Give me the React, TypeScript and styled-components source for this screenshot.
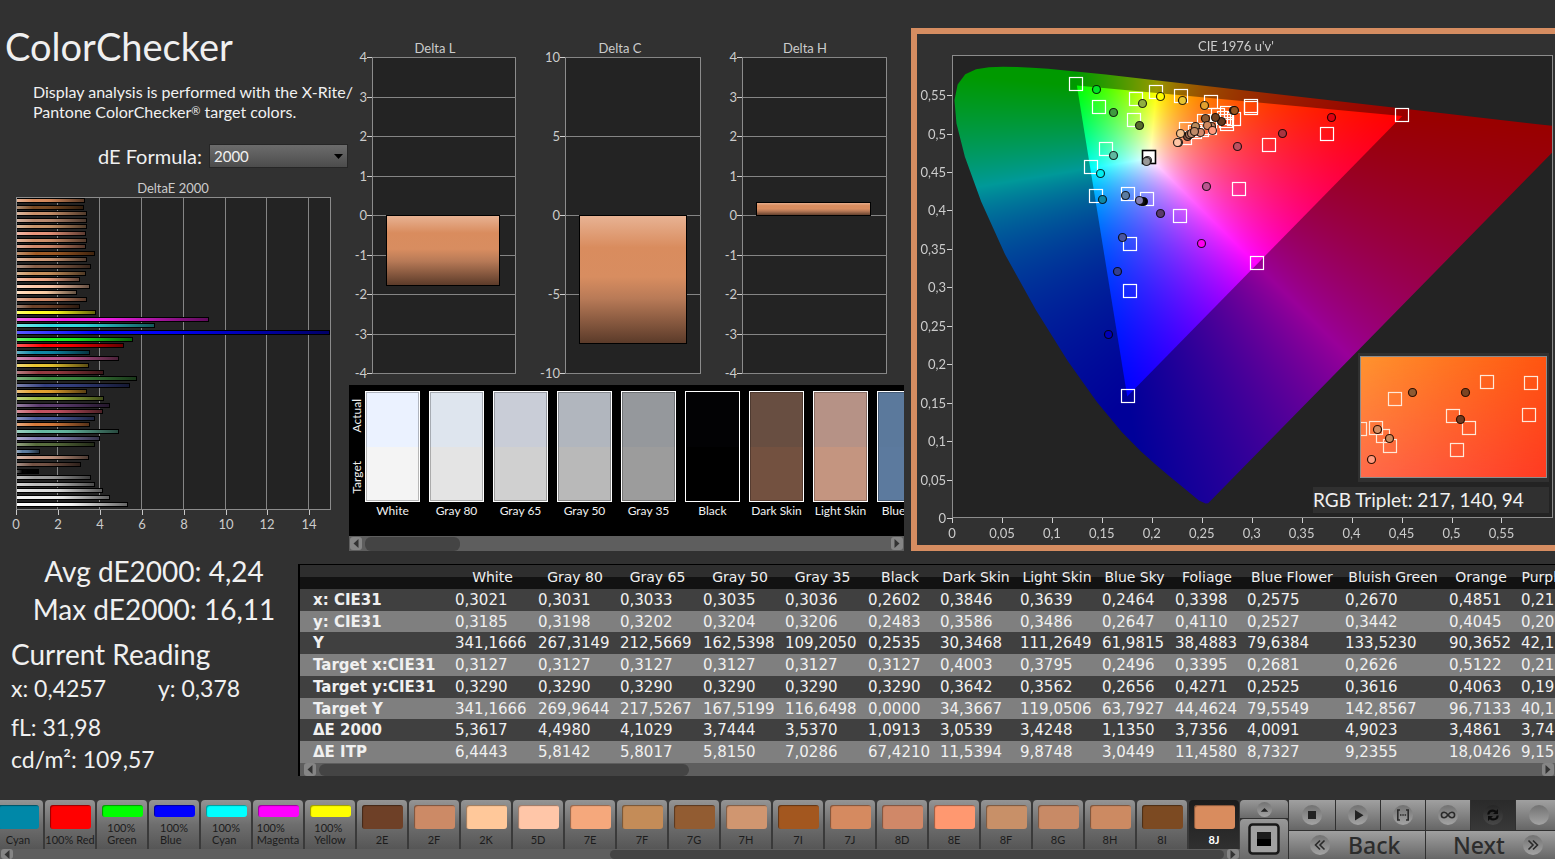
import React, { useEffect, useRef } from "react";
import styled, { createGlobalStyle, css } from "styled-components";

const ui = `Lato, "Liberation Sans", sans-serif`;
const wide = `"DejaVu Sans", "Noto Sans", sans-serif`;

const GlobalStyle = createGlobalStyle`
  *, *::before, *::after { box-sizing: border-box; }
  body { margin: 0; background: #313131; color: #f0f0f0; font-family: ${ui}; overflow-x: hidden; }
  button, select { font: inherit; color: inherit; border: 0; padding: 0; margin: 0; }
  h1, h2, p { margin: 0; font-weight: 400; }
`;

const Page = styled.main`
  display: flex;
  flex-direction: column;
  min-height: 100vh;
  overflow: hidden;
`;

const TopSection = styled.section`
  display: grid;
  grid-template-columns: 349px 555px minmax(0, 1fr);
  align-items: start;
`;

/* ---------- left column ---------- */

const LeftColumn = styled.div`
  padding-top: 22px;
`;

const Title = styled.h1`
  padding-left: 5px;
  font-size: 38px;
  line-height: 48px;
`;

const Description = styled.p`
  padding: 12px 0 0 33px;
  font-size: 16px;
  line-height: 20px;
  white-space: nowrap;
`;

const Registered = styled.span`
  font-size: 11px;
  line-height: 1;
  vertical-align: 3px;
`;

const FormulaRow = styled.div`
  display: flex;
  justify-content: flex-end;
  align-items: center;
  gap: 7px;
  padding: 22px 1px 9px 0;
`;

const FormulaLabel = styled.label`
  font-size: 20px;
  line-height: 24px;
`;

const SelectShell = styled.span`
  display: grid;
  align-items: center;
  width: 139px;
  svg { grid-area: 1 / 1; justify-self: end; margin-right: 5px; pointer-events: none; }
`;

const FormulaSelect = styled.select`
  grid-area: 1 / 1;
  width: 100%;
  height: 24px;
  padding-left: 4px;
  appearance: none;
  border: 1px solid #262626;
  background: linear-gradient(#6c6c6c, #4c4c4c);
  font-size: 15px;
  line-height: 22px;
`;

const ChartSvg = styled.svg`
  display: block;
  width: 100%;
  text { font-family: ${ui}; font-size: 13px; fill: #cccccc; }
`;

const hBars: [number, string][] = [
  [85, "#d98c5e"], [84, "#7a4a22"], [87, "#c8906a"], [87, "#b98a70"], [87, "#c8946a"],
  [86, "#e8947a"], [87, "#d0906c"], [86, "#d0886a"], [95, "#a05a24"], [87, "#cf9a78"],
  [91, "#8a6048"], [86, "#c8905c"], [80, "#f0a888"], [90, "#ffc8a8"], [77, "#ffd0a8"],
  [87, "#d08a68"], [80, "#6f4228"], [96, "#ffff1e"], [209, "#f01ee6"], [155, "#30dce0"],
  [330, "#0000ff"], [133, "#1ef01e"], [124, "#ff0000"], [90, "#0e87a5"], [119, "#bb5590"],
  [89, "#e8c530"], [104, "#93383f"], [137, "#3f8a3f"], [130, "#343f80"], [87, "#e3a02e"],
  [104, "#9fbc40"], [110, "#5a3a6d"], [103, "#c15060"], [95, "#4a5a9f"], [90, "#d67a3a"],
  [119, "#65b89f"], [100, "#8580b5"], [95, "#576c3c"], [40, "#5c7ca0"], [89, "#c29480"],
  [81, "#735244"], [39, "#000000"], [91, "#9a9a9a"], [95, "#bbbbbb"], [103, "#dddddd"],
  [110, "#eeeeee"], [128, "#ffffff"],
];

function DeltaEChart() {
  const ticks = [16, 58, 100, 142, 184, 226, 267, 309];
  return (
    <ChartSvg viewBox="0 0 349 362" role="img" aria-label="DeltaE 2000">
      <defs>
        <linearGradient id="sheen" x1="0" x2="1" y1="0" y2="0">
          <stop offset="0" stopColor="#fff" stopOpacity="0.35" />
          <stop offset="0.25" stopColor="#fff" stopOpacity="0" />
          <stop offset="0.5" stopColor="#000" stopOpacity="0.05" />
          <stop offset="1" stopColor="#000" stopOpacity="0.6" />
        </linearGradient>
      </defs>
      <text x="173" y="16" textAnchor="middle">DeltaE 2000</text>
      <rect x="16.5" y="20.5" width="314" height="312" fill="#232323" stroke="#8c8c8c" />
      {ticks.map((x, i) => (
        <g key={x}>
          {i > 0 && <path d={`M${x - 0.5} 21V332`} stroke="#858585" />}
          <path d={`M${x + 0.5} 333v5`} stroke="#c8c8c8" />
          <text x={x} y="352" textAnchor="middle">{i * 2}</text>
        </g>
      ))}
      {hBars.map(([end, color], i) => {
        const y = Math.round(22 + i * 6.6);
        return (
          <g key={i}>
            <rect x="17" y={y - 1} width={end - 17} height="5" fill="#000" />
            <rect x="17" y={y} width={end - 18} height="3" fill={color} />
            <rect x="17" y={y} width={end - 18} height="3" fill="url(#sheen)" />
          </g>
        );
      })}
    </ChartSvg>
  );
}

/* ---------- delta L / C / H ---------- */

const MiddleColumn = styled.div`
  padding-top: 34px;
`;

type Delta = {
  title: string; center: number; left: number; right: number; max: number; step: number;
  bar: [number, number, number, number];
};

const deltas: Delta[] = [
  { title: "Delta L", center: 86, left: 23, right: 167, max: 4, step: 1, bar: [37, 181, 114, 71] },
  { title: "Delta C", center: 271, left: 216, right: 352, max: 10, step: 5, bar: [230, 181, 108, 129] },
  { title: "Delta H", center: 456, left: 393, right: 538, max: 4, step: 1, bar: [407, 168, 115, 14] },
];

function DeltaCharts() {
  return (
    <ChartSvg viewBox="0 0 555 351" role="img" aria-label="Delta L, Delta C and Delta H">
      <defs>
        <linearGradient id="copper" x1="0" x2="0" y1="0" y2="1">
          <stop offset="0" stopColor="#e8b394" />
          <stop offset="0.25" stopColor="#d98c5e" />
          <stop offset="0.48" stopColor="#d88d60" />
          <stop offset="0.65" stopColor="#b87a57" />
          <stop offset="1" stopColor="#5a3a29" />
        </linearGradient>
      </defs>
      {deltas.map((d) => {
        const values: number[] = [];
        for (let v = d.max; v >= -d.max; v -= d.step) values.push(v);
        return (
          <g key={d.title}>
            <text x={d.center} y="19" textAnchor="middle">{d.title}</text>
            <rect x={d.left + 0.5} y="23.5" width={d.right - d.left - 1} height="316" fill="#232323" stroke="#8c8c8c" />
            {values.map((v, i) => {
              const y = Math.round(23 + (i * 316) / (values.length - 1));
              return (
                <g key={v}>
                  <path d={`M${d.left} ${y + 0.5}H${d.right}`} stroke="#858585" />
                  <path d={`M${d.left - 5} ${y + 0.5}H${d.left}`} stroke="#d0d0d0" />
                  <text x={d.left - 5} y={y + 5} textAnchor="end">{v}</text>
                </g>
              );
            })}
            <rect x={d.bar[0] + 0.5} y={d.bar[1] + 0.5} width={d.bar[2] - 1} height={d.bar[3] - 1} fill="url(#copper)" stroke="#000" />
          </g>
        );
      })}
    </ChartSvg>
  );
}

/* ---------- scroll bars ---------- */

const Track = styled.div<{ $h: number; $pad: number }>`
  display: flex;
  align-items: center;
  gap: 3px;
  height: ${(p) => p.$h}px;
  padding: 0 1px 0 ${(p) => p.$pad}px;
  background: #5e5e5e;
`;

const ArrowButton = styled.button<{ $end?: boolean }>`
  display: grid;
  place-items: center;
  flex: none;
  width: 12px;
  height: 100%;
  max-height: 13px;
  margin-left: ${(p) => (p.$end ? "auto" : "0")};
  border-radius: 3px;
  background: #858585;
`;

const Thumb = styled.div<{ $w: string; $offset?: string }>`
  width: ${(p) => p.$w};
  height: calc(100% - 1px);
  margin-left: ${(p) => p.$offset ?? "0"};
  border-radius: 6px;
  background: #444;
`;

function ScrollBar({ h, w, offset, name, pad = 1 }: { h: number; w: string; offset?: string; name: string; pad?: number }) {
  return (
    <Track $h={h} $pad={pad}>
      <ArrowButton aria-label={`Scroll ${name} left`}>
        <svg width="6" height="9" viewBox="0 0 6 9"><path d="M5.500 0v9L0.500 4.500z" fill="#333" /></svg>
      </ArrowButton>
      <Thumb $w={w} $offset={offset} />
      <ArrowButton $end aria-label={`Scroll ${name} right`}>
        <svg width="6" height="9" viewBox="0 0 6 9"><path d="M0.500 0v9L5.500 4.500z" fill="#333" /></svg>
      </ArrowButton>
    </Track>
  );
}

/* ---------- swatches ---------- */

const SwatchPanel = styled.div`
  background: #000;
  overflow: hidden;
`;

const SwatchRow = styled.div`
  display: flex;
  height: 151px;
  padding-top: 6px;
  overflow: hidden;
`;

const SideLabels = styled.div`
  display: flex;
  flex: none;
  flex-direction: column;
  justify-content: space-between;
  align-items: center;
  width: 16px;
  height: 111px;
  padding: 8px 0;
  span {
    writing-mode: vertical-rl;
    transform: rotate(180deg);
    font-size: 12px;
    line-height: 14px;
  }
`;

const SwatchItem = styled.figure`
  flex: none;
  width: 55px;
  margin: 0 9px 0 0;
  figcaption {
    display: flex;
    justify-content: center;
    font-size: 12px;
    line-height: 18px;
    white-space: nowrap;
  }
`;

const SwatchBox = styled.div<{ $actual: string; $target: string }>`
  height: 111px;
  border: 1px solid #fff;
  box-shadow: inset 0 0 0 1px rgba(0, 0, 0, 0.25);
  background: linear-gradient(${(p) => p.$actual} 50%, ${(p) => p.$target} 50%);
`;

const swatches: [string, string, string][] = [
  ["White", "#ebf2ff", "#f4f4f4"],
  ["Gray 80", "#dee5ee", "#e4e4e4"],
  ["Gray 65", "#c9cdd7", "#d0d0d0"],
  ["Gray 50", "#b1b6be", "#b9b9b9"],
  ["Gray 35", "#95989c", "#9c9c9c"],
  ["Black", "#020204", "#000000"],
  ["Dark Skin", "#684e41", "#735140"],
  ["Light Skin", "#b69286", "#c49580"],
  ["Blue Sky", "#5b799c", "#5c7a9e"],
];

/* ---------- CIE chart ---------- */

const CiePanel = styled.div`
  display: grid;
  margin: 28px 0 0 7px;
  border: 6px solid #d68d61;
  border-right: 0;
  overflow: hidden;
`;

const layer = css`
  grid-area: 1 / 1;
  display: block;
  width: 100%;
  height: auto;
`;

const CieCanvas = styled.canvas`
  ${layer}
`;

const CieOverlay = styled.svg`
  ${layer}
  text { font-family: ${ui}; font-size: 13px; fill: #cccccc; }
  text.triplet { font-size: 19px; fill: #f0f0f0; }
`;

const W = 638;
const H = 511;
const PLOT = { left: 35, top: 22, right: 635, bottom: 484 };
const toX = (u: number) => PLOT.left + u * 999;
const toY = (v: number) => PLOT.bottom - v * 769;

// Spectral locus, CIE 1931 x,y
const locus: [number, number][] = [
  [0.1738, 0.0058], [0.1722, 0.0057], [0.1689, 0.0069], [0.1644, 0.0109],
  [0.1566, 0.0177], [0.151, 0.0227], [0.144, 0.0297], [0.1355, 0.0399], [0.1241, 0.0578],
  [0.1096, 0.0868], [0.0913, 0.1327], [0.0687, 0.2007], [0.0454, 0.295], [0.0235, 0.4127],
  [0.0082, 0.5384], [0.0039, 0.6548], [0.0139, 0.7502], [0.0389, 0.812], [0.0743, 0.8338],
  [0.1142, 0.8262], [0.1547, 0.8059], [0.1929, 0.7816], [0.2296, 0.7543], [0.2658, 0.7243],
  [0.3016, 0.6923], [0.3731, 0.6245], [0.4441, 0.5547], [0.5125, 0.4866], [0.5752, 0.4242],
  [0.627, 0.3725], [0.6658, 0.334], [0.6915, 0.3083], [0.719, 0.2809], [0.7347, 0.2653],
];

const locusPoints = locus.map(([x, y]) => {
  const d = -2 * x + 12 * y + 3;
  return [toX((4 * x) / d) + 1, toY((9 * y) / d)] as [number, number];
});

const gamut: [number, number][] = [
  [toX(0.125), toY(0.5625)], [toX(0.4507), toY(0.5229)], [toX(0.1754), toY(0.1579)],
];

function shade(gain: number) {
  const source = document.createElement("canvas");
  source.width = W;
  source.height = H;
  const ctx = source.getContext("2d")!;
  const img = ctx.createImageData(W, H);
  for (let py = 0; py < H; py++) {
    const v = Math.max((PLOT.bottom - py) / 769, 0.001);
    for (let px = 0; px < W; px++) {
      const u = (px - PLOT.left) / 999;
      const X = (9 * u) / (4 * v);
      const Z = (12 - 3 * u - 20 * v) / (4 * v);
      const r = Math.max(0, 3.2406 * X - 1.5372 - 0.4986 * Z);
      const g = Math.max(0, -0.9689 * X + 1.8758 + 0.0415 * Z);
      const b = Math.max(0, 0.0557 * X - 0.204 + 1.057 * Z);
      const k = (255 * gain) / Math.max(r, g, b, 0.0001);
      const i = (py * W + px) * 4;
      img.data[i] = r * k;
      img.data[i + 1] = g * k;
      img.data[i + 2] = b * k;
      img.data[i + 3] = 255;
    }
  }
  ctx.putImageData(img, 0, 0);
  return source;
}

function paint(ctx: CanvasRenderingContext2D, points: [number, number][], gain: number) {
  ctx.save();
  ctx.beginPath();
  points.forEach(([x, y], i) => (i ? ctx.lineTo(x, y) : ctx.moveTo(x, y)));
  ctx.closePath();
  ctx.clip();
  ctx.drawImage(shade(gain), 0, 0);
  ctx.restore();
}

const targets: [number, number][] = [
  [1076, 84], [1099, 107], [1136, 99], [1156, 92], [1181, 96], [1134, 120], [1106, 149],
  [1091, 167], [1096, 196], [1128, 194], [1147, 199], [1180, 216], [1130, 244], [1130, 291],
  [1211, 102], [1186, 129], [1185, 138], [1204, 121], [1218, 115], [1227, 113], [1234, 119],
  [1227, 124], [1226, 121], [1251, 106], [1251, 108], [1210, 128], [1195, 132], [1202, 130],
  [1224, 118], [1269, 145], [1239, 189], [1327, 134], [1402, 115], [1257, 263], [1128, 396],
];

const readings: [number, number, string][] = [
  [1096, 89, "#00e626"], [1113, 112, "#3f9a3f"], [1142, 103, "#8fae40"], [1139, 125, "#566b2c"],
  [1160, 96, "#ffff00"], [1182, 100, "#e8c530"], [1204, 105, "#e3a02e"], [1113, 155, "#5fb8a0"],
  [1100, 173, "#00f0f0"], [1102, 199, "#0e87a5"], [1125, 195, "#5c7ca0"], [1143, 201, "#000000"],
  [1141, 201, "#111111"], [1139, 200, "#8580b5"], [1147, 160, "#aaaaaa"], [1146, 161, "#999999"],
  [1160, 213, "#5a3a6d"], [1206, 186, "#bb5590"], [1237, 146, "#bc5060"], [1282, 133, "#a83540"],
  [1233, 110, "#7a4a22"], [1234, 110, "#9a561f"], [1205, 118, "#8d5a32"], [1221, 121, "#66381f"],
  [1215, 117, "#6f3f1e"], [1211, 126, "#b88060"], [1207, 125, "#d08a60"], [1212, 130, "#ff9a7c"],
  [1195, 126, "#b88b5c"], [1187, 136, "#7a5040"], [1189, 134, "#b07c60"], [1191, 133, "#c08c70"],
  [1200, 132, "#d08a6c"], [1194, 131, "#bf8a68"], [1180, 133, "#f6c08c"], [1178, 142, "#d8a890"],
  [1177, 142, "#ffc6a5"], [1122, 237, "#4a55a0"], [1117, 271, "#343f90"], [1201, 243, "#ff00f0"],
  [1108, 334, "#0000b8"], [1331, 117, "#e00010"],
];

const insetTargets: [number, number][] = [
  [1395, 399], [1487, 382], [1531, 383], [1529, 415], [1453, 416], [1469, 428], [1457, 450],
  [1360, 429], [1376, 428], [1383, 436], [1390, 446],
];

const insetReadings: [number, number, string][] = [
  [1412, 392, "#8d5a32"], [1465, 392, "#7c4422"], [1460, 419, "#6e3a20"],
  [1377, 429, "#d68d61"], [1389, 438, "#c88a5e"], [1371, 459, "#ff9a80"],
];

const comma = (n: number) => String(Number(n.toFixed(2))).replace(".", ",");

function Box({ p, stroke = "#fff", fill = "none", w = 1.2 }: { p: [number, number]; stroke?: string; fill?: string; w?: number }) {
  return <rect x={p[0] - 6.5} y={p[1] - 6.5} width="13" height="13" fill={fill} stroke={stroke} strokeWidth={w} />;
}

function CieChart() {
  const ref = useRef<HTMLCanvasElement>(null);
  useEffect(() => {
    const ctx = ref.current!.getContext("2d")!;
    ctx.clearRect(0, 0, W, H);
    ctx.fillStyle = "#232323";
    ctx.fillRect(PLOT.left, PLOT.top, PLOT.right - PLOT.left, PLOT.bottom - PLOT.top);
    ctx.save();
    ctx.beginPath();
    ctx.rect(PLOT.left, PLOT.top, PLOT.right - PLOT.left, PLOT.bottom - PLOT.top);
    ctx.clip();
    paint(ctx, locusPoints, 0.6);
    paint(ctx, gamut, 1);
    ctx.restore();
  }, []);
  const steps = Array.from({ length: 12 }, (_, i) => i * 0.05);
  return (
    <CiePanel>
      <CieCanvas ref={ref} width={W} height={H} />
      <CieOverlay viewBox={`0 0 ${W} ${H}`} role="img" aria-label="CIE 1976 u'v' chromaticity diagram">
        <defs>
          <linearGradient id="insetTop"><stop offset="0" stopColor="#ff942e" /><stop offset="1" stopColor="#ff5510" /></linearGradient>
          <linearGradient id="insetBottom"><stop offset="0" stopColor="#ff6a4c" /><stop offset="1" stopColor="#ff3a22" /></linearGradient>
          <linearGradient id="fade" x1="0" x2="0" y1="0" y2="1"><stop offset="0" stopColor="#000" /><stop offset="1" stopColor="#fff" /></linearGradient>
          <mask id="fadeMask"><rect x="443" y="322" width="187" height="122" fill="url(#fade)" /></mask>
          <clipPath id="insetClip"><rect x="1361" y="357" width="185" height="120" /></clipPath>
        </defs>
        <text x="319" y="17" textAnchor="middle">CIE 1976 u'v'</text>
        <rect x="35.500" y="21.500" width="600" height="462" fill="none" stroke="#8c8c8c" />
        {steps.map((s) => (
          <g key={s}>
            <path d={`M${Math.round(toX(s)) + 0.5} 484v5M30 ${Math.round(toY(s)) + 0.5}h5`} stroke="#d0d0d0" />
            <text x={toX(s)} y="504" textAnchor="middle">{comma(s)}</text>
            <text x="29" y={toY(s) + 5} textAnchor="end">{comma(s)}</text>
          </g>
        ))}
        <g transform="translate(-917 -34)">
          {targets.map((p, i) => <Box key={i} p={p} />)}
          <Box p={[1149, 157]} stroke="#000" fill="#fff" w={1.6} />
          {readings.map(([x, y, c], i) => (
            <circle key={i} cx={x + 0.5} cy={y + 0.5} r="4" fill={c} stroke="#000" strokeOpacity="0.8" strokeWidth="1.2" />
          ))}
        </g>
        <rect x="441" y="319" width="191" height="129" fill="#303030" />
        <rect x="443" y="322" width="187" height="122" fill="url(#insetTop)" />
        <rect x="443" y="322" width="187" height="122" fill="url(#insetBottom)" mask="url(#fadeMask)" />
        <g transform="translate(-917 -34)" clipPath="url(#insetClip)">
          {insetTargets.map((p, i) => <Box key={i} p={p} stroke="#ffe8d8" />)}
          {insetReadings.map(([x, y, c], i) => (
            <circle key={i} cx={x + 0.5} cy={y + 0.5} r="4" fill={c} stroke="#301000" strokeWidth="1.2" />
          ))}
        </g>
        <rect x="443.500" y="322.500" width="186" height="121" fill="none" stroke="#8c8c8c" />
        <rect x="396" y="453" width="236" height="26" fill="#303030" />
        <text className="triplet" x="396" y="473">RGB Triplet: 217, 140, 94</text>
      </CieOverlay>
    </CiePanel>
  );
}

/* ---------- summary + table ---------- */

const DataSection = styled.section`
  display: grid;
  grid-template-columns: 298px minmax(0, 1fr);
  padding-top: 13px;
`;

const Summary = styled.div`
  display: flex;
  flex-direction: column;
  margin-top: -12px;
`;

const BigStat = styled.p`
  padding-left: 10px;
  font-size: 28px;
  line-height: 38px;
  text-align: center;
  white-space: nowrap;
`;

const ReadingTitle = styled.h2`
  padding: 8px 0 0 11px;
  font-size: 28px;
  line-height: 36px;
`;

const ReadingRow = styled.div<{ $gap?: number }>`
  display: grid;
  grid-template-columns: 147px auto;
  padding: ${(p) => p.$gap ?? 0}px 0 0 11px;
  font-size: 23px;
  line-height: 32px;
  white-space: nowrap;
`;

const TableFrame = styled.div`
  border-top: 1px solid #000;
  border-left: 2px solid #000;
  overflow: hidden;
`;

const DataTable = styled.table`
  table-layout: fixed;
  width: 1317px;
  border-collapse: collapse;
  font-family: ${wide};
  font-size: 15px;
  line-height: 20px;
  th, td { padding: 0 4px; height: 22px; white-space: nowrap; overflow: hidden; text-overflow: clip; }
  td { text-align: left; color: #f0f0f0; }
  thead th {
    height: 24px;
    padding: 0;
    font-size: 14px;
    font-weight: 400;
  }
  thead { background: linear-gradient(#2e2e2e 50%, #121212 50%); }
  tbody th { padding-left: 13px; font-weight: 700; text-align: left; }
  tbody tr { background: #404040; }
  tbody tr:nth-child(even) { background: #7f7f7f; }
  tbody tr:nth-child(4n + 2) > * { height: 21px; }
`;

const columns: [string, number][] = [
  ["White", 83], ["Gray 80", 82], ["Gray 65", 83], ["Gray 50", 82], ["Gray 35", 83], ["Black", 72],
  ["Dark Skin", 80], ["Light Skin", 82], ["Blue Sky", 73], ["Foliage", 72], ["Blue Flower", 98],
  ["Bluish Green", 104], ["Orange", 72], ["Purplish Blue", 100],
];

const rows: [string, string][] = [
  ["x: CIE31", "0,3021 0,3031 0,3033 0,3035 0,3036 0,2602 0,3846 0,3639 0,2464 0,3398 0,2575 0,2670 0,4851 0,21"],
  ["y: CIE31", "0,3185 0,3198 0,3202 0,3204 0,3206 0,2483 0,3586 0,3486 0,2647 0,4110 0,2527 0,3442 0,4045 0,20"],
  ["Y", "341,1666 267,3149 212,5669 162,5398 109,2050 0,2535 30,3468 111,2649 61,9815 38,4883 79,6384 133,5230 90,3652 42,1"],
  ["Target x:CIE31", "0,3127 0,3127 0,3127 0,3127 0,3127 0,3127 0,4003 0,3795 0,2496 0,3395 0,2681 0,2626 0,5122 0,21"],
  ["Target y:CIE31", "0,3290 0,3290 0,3290 0,3290 0,3290 0,3290 0,3642 0,3562 0,2656 0,4271 0,2525 0,3616 0,4063 0,19"],
  ["Target Y", "341,1666 269,9644 217,5267 167,5199 116,6498 0,0000 34,3667 119,0506 63,7927 44,4624 79,5549 142,8567 96,7133 40,1"],
  ["ΔE 2000", "5,3617 4,4980 4,1029 3,7444 3,5370 1,0913 3,0539 3,4248 1,1350 3,7356 4,0091 4,9023 3,4861 3,74"],
  ["ΔE ITP", "6,4443 5,8142 5,8017 5,8150 7,0286 67,4210 11,5394 9,8748 3,0449 11,4580 8,7327 9,2355 18,0426 9,15"],
];

/* ---------- bottom bar ---------- */

const BottomBar = styled.footer`
  display: grid;
  grid-template-columns: minmax(0, 1fr) 49px 266px;
  height: 59px;
  margin-top: auto;
`;

const PatchArea = styled.div`
  display: flex;
  flex-direction: column;
  overflow: hidden;
  background: #3a3a3a;
`;

const PatchRow = styled.div`
  display: flex;
  justify-content: flex-end;
  gap: 2px;
  height: 49px;
  padding-right: 1px;
`;

const PatchButton = styled.button<{ $active: boolean }>`
  display: flex;
  flex: none;
  flex-direction: column;
  align-items: center;
  justify-content: space-between;
  width: 50px;
  padding: 5px 0 3px;
  border-radius: 4px 4px 0 0;
  background: ${(p) => (p.$active ? "linear-gradient(#1c1c1c, #303030)" : "linear-gradient(#949494, #6e6e6e 50%, #565656)")};
  color: ${(p) => (p.$active ? "#fff" : "#1c1c1c")};
  font-size: 11px;
  font-weight: ${(p) => (p.$active ? 700 : 400)};
  line-height: 12px;
  text-align: left;
  white-space: pre;
`;

const Chip = styled.span<{ $color: string; $short: boolean }>`
  width: 41px;
  height: ${(p) => (p.$short ? 12 : 24)}px;
  border-radius: 3px;
  background: ${(p) => p.$color};
  box-shadow: inset 1px 1px 1px rgba(0, 0, 0, 0.4);
`;

const patches: [string, string][] = [
  ["Cyan", "#0088a8"], ["100% Red", "#ff0000"], ["100%\nGreen", "#00ff00"], ["100%\nBlue", "#0000ff"],
  ["100%\nCyan", "#00ffff"], ["100%\nMagenta", "#ff00ff"], ["100%\nYellow", "#ffff00"], ["2E", "#6e4027"],
  ["2F", "#cc8a66"], ["2K", "#ffc89a"], ["5D", "#ffc6a8"], ["7E", "#f5a87c"], ["7F", "#c48c58"],
  ["7G", "#925c32"], ["7H", "#d09670"], ["7I", "#a3571f"], ["7J", "#d58a60"], ["8D", "#d08868"],
  ["8E", "#ff9870"], ["8F", "#c89068"], ["8G", "#c88a66"], ["8H", "#cc8a62"], ["8I", "#7c4a22"], ["8J", "#d98c5e"],
];

const SideControls = styled.div`
  display: grid;
  grid-template-rows: 18px 1fr;
  gap: 1px;
  padding-right: 1px;
  background: #303030;
`;

const SideButton = styled.button`
  display: grid;
  place-items: center;
  border-radius: 4px 4px 0 0;
  background: linear-gradient(#989898, #6a6a6a);
`;

const Transport = styled.div`
  display: grid;
  grid-template-rows: 30px 28px;
  gap: 1px;
  overflow: hidden;
  background: #303030;
`;

const TransportRow = styled.div<{ $cols: string }>`
  display: grid;
  grid-template-columns: ${(p) => p.$cols};
  gap: 1px;
`;

const TransportButton = styled.button<{ $pressed?: boolean }>`
  display: grid;
  place-items: center;
  background: ${(p) => (p.$pressed ? "linear-gradient(#2a2a2a, #383838)" : "linear-gradient(#a0a0a0, #666)")};
`;

const NavButton = styled.button<{ $inset: number }>`
  display: flex;
  align-items: center;
  gap: 18px;
  padding-left: ${(p) => p.$inset}px;
  color: #2c2c2c;
  background: linear-gradient(#a0a0a0, #666);
  font-family: "Noto Sans", sans-serif;
  font-size: 23px;
  font-weight: 500;
  line-height: 28px;
`;

function Knob({ children, dark, size = 20 }: { children?: React.ReactNode; dark?: boolean; size?: number }) {
  return (
    <svg width={size} height={size} viewBox="0 0 20 20" fill="none" stroke="#2a2a2a" strokeWidth="1.600">
      <circle cx="10" cy="10" r="10" stroke="none" fill={dark ? "url(#knobDark)" : "url(#knob)"} />
      {children}
    </svg>
  );
}

export default function App() {
  return (
    <Page>
      <GlobalStyle />
      <TopSection>
        <LeftColumn>
          <Title>ColorChecker</Title>
          <Description>
            Display analysis is performed with the X-Rite/<br />Pantone ColorChecker<Registered>®</Registered> target colors.
          </Description>
          <FormulaRow>
            <FormulaLabel htmlFor="formula">dE Formula:</FormulaLabel>
            <SelectShell>
              <FormulaSelect id="formula" defaultValue="2000">
                <option>2000</option>
              </FormulaSelect>
              <svg width="9" height="5" viewBox="0 0 9 5"><path d="M0 0h9L4.500 5z" fill="#000" /></svg>
            </SelectShell>
          </FormulaRow>
          <DeltaEChart />
        </LeftColumn>

        <MiddleColumn>
          <DeltaCharts />
          <SwatchPanel>
            <SwatchRow>
              <SideLabels><span>Actual</span><span>Target</span></SideLabels>
              {swatches.map(([name, actual, target]) => (
                <SwatchItem key={name}>
                  <SwatchBox $actual={actual} $target={target} />
                  <figcaption>{name}</figcaption>
                </SwatchItem>
              ))}
            </SwatchRow>
            <ScrollBar h={15} w="95px" name="swatches" />
          </SwatchPanel>
        </MiddleColumn>

        <CieChart />
      </TopSection>

      <DataSection>
        <Summary>
          <BigStat>Avg dE2000: 4,24</BigStat>
          <BigStat>Max dE2000: 16,11</BigStat>
          <ReadingTitle>Current Reading</ReadingTitle>
          <ReadingRow><span>x: 0,4257</span><span>y: 0,378</span></ReadingRow>
          <ReadingRow $gap={7}><span>fL: 31,98</span></ReadingRow>
          <ReadingRow><span>cd/m²: 109,57</span></ReadingRow>
        </Summary>
        <TableFrame>
          <DataTable>
            <colgroup>
              <col style={{ width: 151 }} />
              {columns.map(([name, width]) => <col key={name} style={{ width }} />)}
            </colgroup>
            <thead>
              <tr>
                <th />
                {columns.map(([name]) => <th key={name} scope="col">{name}</th>)}
              </tr>
            </thead>
            <tbody>
              {rows.map(([label, values]) => (
                <tr key={label}>
                  <th scope="row">{label}</th>
                  {values.split(" ").map((v, i) => <td key={i}>{v}</td>)}
                </tr>
              ))}
            </tbody>
          </DataTable>
          <ScrollBar h={13} w="370px" name="table" pad={4} />
        </TableFrame>
      </DataSection>

      <BottomBar>
        <PatchArea>
          <PatchRow>
            {patches.map(([name, color]) => (
              <PatchButton key={name} $active={name === "8J"}>
                <Chip $color={color} $short={name.includes("\n")} />
                <span>{name}</span>
              </PatchButton>
            ))}
          </PatchRow>
          <ScrollBar h={10} w="50%" offset="48%" name="patches" />
        </PatchArea>
        <SideControls>
          <SideButton aria-label="Expand">
            <Knob size={15}><path d="M5 13h10l-5-5z" fill="#222" stroke="none" /></Knob>
          </SideButton>
          <SideButton aria-label="Patch window">
            <svg width="32" height="32" viewBox="0 0 32 32">
              <defs>
                <linearGradient id="knob" x1="0" x2="0" y1="0" y2="1"><stop offset="0" stopColor="#727272" /><stop offset="1" stopColor="#a4a4a4" /></linearGradient>
                <linearGradient id="knobDark" x1="0" x2="0" y1="0" y2="1"><stop offset="0" stopColor="#262626" /><stop offset="1" stopColor="#484848" /></linearGradient>
              </defs>
              <rect x="1.500" y="1.500" width="29" height="29" rx="3" fill="#a0a0a0" stroke="#181818" strokeWidth="2.500" />
              <rect x="9" y="9" width="14" height="14" fill="#000" />
              <rect x="9" y="9" width="14" height="7" fill="#1c1c1c" />
            </svg>
          </SideButton>
        </SideControls>
        <Transport>
          <TransportRow $cols="46px 44px 44px 44px 44px 46px">
            <TransportButton aria-label="Stop"><Knob><rect x="6" y="6" width="8" height="8" fill="#222" stroke="none" /></Knob></TransportButton>
            <TransportButton aria-label="Play"><Knob><path d="M7 5l8.500 5.200L7 15.500z" fill="#222" stroke="none" /></Knob></TransportButton>
            <TransportButton aria-label="Range">
              <Knob><path d="M7 5H4.800v10H7M13 5h2.200v10H13" /><path d="M7 10h1.500M9.300 10h1.500M11.600 10h1.500" /></Knob>
            </TransportButton>
            <TransportButton aria-label="Continuous">
              <Knob><path d="M10 10c-1.500-2-2.600-2.700-3.900-2.700a2.700 2.700 0 0 0 0 5.400c1.300 0 2.400-.7 3.900-2.700s2.600-2.700 3.900-2.700a2.700 2.700 0 0 1 0 5.400c-1.300 0-2.400-.7-3.900-2.700z" /></Knob>
            </TransportButton>
            <TransportButton $pressed aria-label="Repeat">
              <Knob dark>
                <g stroke="#0c0c0c" strokeWidth="2.200">
                  <path d="M5.300 9.500C5.600 6.800 7.600 5.600 9.800 5.600c1.300 0 2.300.5 3 1.200M14.700 10.500c-.3 2.700-2.300 3.900-4.500 3.900-1.300 0-2.300-.5-3-1.200" />
                  <path d="M15 4v5h-5zM5 16v-5h5z" fill="#0c0c0c" stroke="none" />
                </g>
              </Knob>
            </TransportButton>
            <TransportButton aria-label="Record"><Knob /></TransportButton>
          </TransportRow>
          <TransportRow $cols="136px 136px">
            <NavButton $inset={21}>
              <Knob><path d="M10 5.500L5.500 10l4.500 4.500M14.500 5.500L10 10l4.500 4.500" /></Knob>
              Back
            </NavButton>
            <NavButton $inset={27}>
              Next
              <Knob><path d="M5.500 5.500L10 10l-4.500 4.500M10 5.500l4.500 4.500-4.500 4.500" /></Knob>
            </NavButton>
          </TransportRow>
        </Transport>
      </BottomBar>
    </Page>
  );
}
